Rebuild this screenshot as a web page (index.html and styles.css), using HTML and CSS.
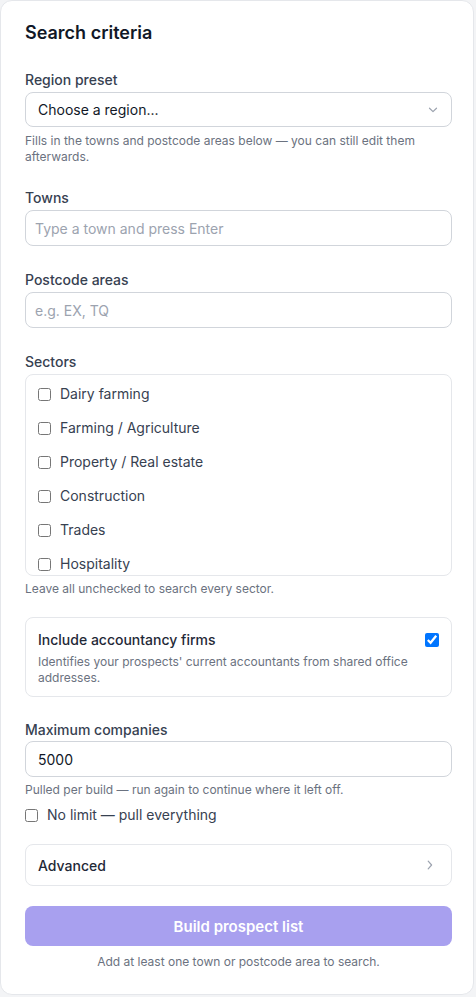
FILE: index.html
```html
<!DOCTYPE html>
<html lang="en">
<head>
<meta charset="utf-8">
<title>Search criteria</title>
<link rel="stylesheet" href="styles.css">
</head>
<body>
<div class="card">
  <h2 class="title">Search criteria</h2>

  <div class="field field-first">
    <label class="label">Region preset</label>
    <div class="select">
      <span class="select-text">Choose a region...</span>
      <svg class="chev-down" width="10" height="6" viewBox="0 0 10 6"><path d="M1.5 1.2 L5 4.6 L8.5 1.2" fill="none" stroke="#9ca3af" stroke-width="1.2" stroke-linecap="round" stroke-linejoin="round"/></svg>
    </div>
    <p class="help">Fills in the towns and postcode areas below — you can still edit them afterwards.</p>
  </div>

  <div class="field field-towns">
    <label class="label">Towns</label>
    <input class="input input-tag" type="text" placeholder="Type a town and press Enter">
  </div>

  <div class="field">
    <label class="label">Postcode areas</label>
    <input class="input input-tag" type="text" placeholder="e.g. EX, TQ">
  </div>

  <div class="field">
    <label class="label">Sectors</label>
    <div class="sectors">
      <label class="sector"><input type="checkbox" class="cb"><span>Dairy farming</span></label>
      <label class="sector"><input type="checkbox" class="cb"><span>Farming / Agriculture</span></label>
      <label class="sector"><input type="checkbox" class="cb"><span>Property / Real estate</span></label>
      <label class="sector"><input type="checkbox" class="cb"><span>Construction</span></label>
      <label class="sector"><input type="checkbox" class="cb"><span>Trades</span></label>
      <label class="sector"><input type="checkbox" class="cb"><span>Hospitality</span></label>
    </div>
    <p class="help help-sectors">Leave all unchecked to search every sector.</p>
  </div>

  <div class="option-box">
    <div class="option-text">
      <div class="option-title">Include accountancy firms</div>
      <div class="option-desc">Identifies your prospects' current accountants from shared office addresses.</div>
    </div>
    <input type="checkbox" class="cb cb-right" checked>
  </div>

  <div class="field field-max">
    <label class="label">Maximum companies</label>
    <input class="input input-num" type="text" value="5000">
    <p class="help help-max">Pulled per build — run again to continue where it left off.</p>
    <label class="nolimit"><input type="checkbox" class="cb"><span>No limit — pull everything</span></label>
  </div>

  <div class="advanced">
    <span>Advanced</span>
    <svg class="chev-right" width="6" height="10" viewBox="0 0 6 10"><path d="M1.2 1.2 L4.6 5 L1.2 8.8" fill="none" stroke="#9ca3af" stroke-width="1.2" stroke-linecap="round" stroke-linejoin="round"/></svg>
  </div>

  <button class="build" type="button" disabled>Build prospect list</button>
  <p class="foot">Add at least one town or postcode area to search.</p>
</div>
</body>
</html>
```

FILE: styles.css
```css
* { box-sizing: border-box; }

html, body {
  margin: 0;
  padding: 0;
  background: #f3f4f6;
}

body {
  font-family: Inter, "Noto Sans", "Liberation Sans", sans-serif;
  color: #111827;
}

.card {
  width: 474px;
  height: 995px;
  background: #ffffff;
  border: 1px solid #e5e7eb;
  border-radius: 12px;
  padding: 20px 21px 22px 24px;
  display: flex;
  flex-direction: column;
}

.title {
  margin: 0;
  font-size: 18px;
  line-height: 24px;
  font-weight: 600;
  color: #111827;
}

.field {
  display: flex;
  flex-direction: column;
  margin-top: 24px;
}

.field-first { margin-top: 25px; }
.field-towns { margin-top: 23px; }

.label {
  font-size: 14px;
  line-height: 20px;
  font-weight: 500;
  color: #374151;
  margin-bottom: 2px;
}

.select {
  height: 35px;
  border: 1px solid #d1d5db;
  border-radius: 8px;
  padding: 0 13px 0 12px;
  display: flex;
  align-items: center;
  justify-content: space-between;
  background: #fff;
}

.select-text {
  font-size: 14px;
  color: #111827;
}

.chev-down { display: block; }

.help {
  margin: 6px 0 0;
  font-size: 12px;
  line-height: 16px;
  color: #6b7280;
}

.input {
  height: 36px;
  width: 100%;
  border: 1px solid #d1d5db;
  border-radius: 8px;
  font-family: inherit;
  font-size: 14px;
  color: #111827;
  background: #fff;
  outline: none;
  margin: 0;
}

.input-tag { padding: 0 9px; }
.input-num { padding: 0 12px; }

.input::placeholder { color: #9ca3af; }

.sectors {
  height: 202px;
  border: 1px solid #e5e7eb;
  border-radius: 8px;
  padding: 2px 0;
  overflow-y: hidden;
}

.sector {
  display: flex;
  align-items: center;
  gap: 9px;
  padding: 7px 12px;
  font-size: 14px;
  line-height: 20px;
  color: #374151;
}

.cb {
  width: 13px;
  height: 13px;
  margin: 0;
  flex: none;
}

.help-sectors { margin-top: 5px; }

.option-box {
  margin-top: 20px;
  border: 1px solid #e5e7eb;
  border-radius: 8px;
  padding: 12px 12px 10px 12px;
  display: flex;
  justify-content: space-between;
  align-items: flex-start;
  gap: 12px;
}

.option-title {
  font-size: 14px;
  line-height: 20px;
  font-weight: 500;
  color: #1f2937;
}

.option-desc {
  margin-top: 4px;
  font-size: 12px;
  line-height: 16px;
  color: #6b7280;
}

.cb-right { margin-top: 3px; width: 14px; height: 14px; }

.field-max { margin-top: 23px; }

.field-max .label { margin-bottom: 1px; }

.help-max { margin-top: 5px; }

.nolimit {
  display: flex;
  align-items: center;
  gap: 9px;
  margin-top: 7px;
  font-size: 14px;
  line-height: 20px;
  color: #374151;
}

.advanced {
  margin-top: 19px;
  height: 42px;
  border: 1px solid #e5e7eb;
  border-radius: 8px;
  padding: 0 18px 0 12px;
  display: flex;
  align-items: center;
  justify-content: space-between;
  font-size: 14px;
  font-weight: 500;
  color: #1f2937;
}

.chev-right { display: block; }

.build {
  margin-top: 20px;
  height: 40px;
  width: 100%;
  border: none;
  border-radius: 8px;
  background: #a8a0ef;
  color: #ffffff;
  font-family: inherit;
  font-size: 15px;
  font-weight: 600;
  cursor: not-allowed;
}

.foot {
  margin: 8px 0 0;
  text-align: center;
  font-size: 12px;
  line-height: 16px;
  color: #6b7280;
}
```
